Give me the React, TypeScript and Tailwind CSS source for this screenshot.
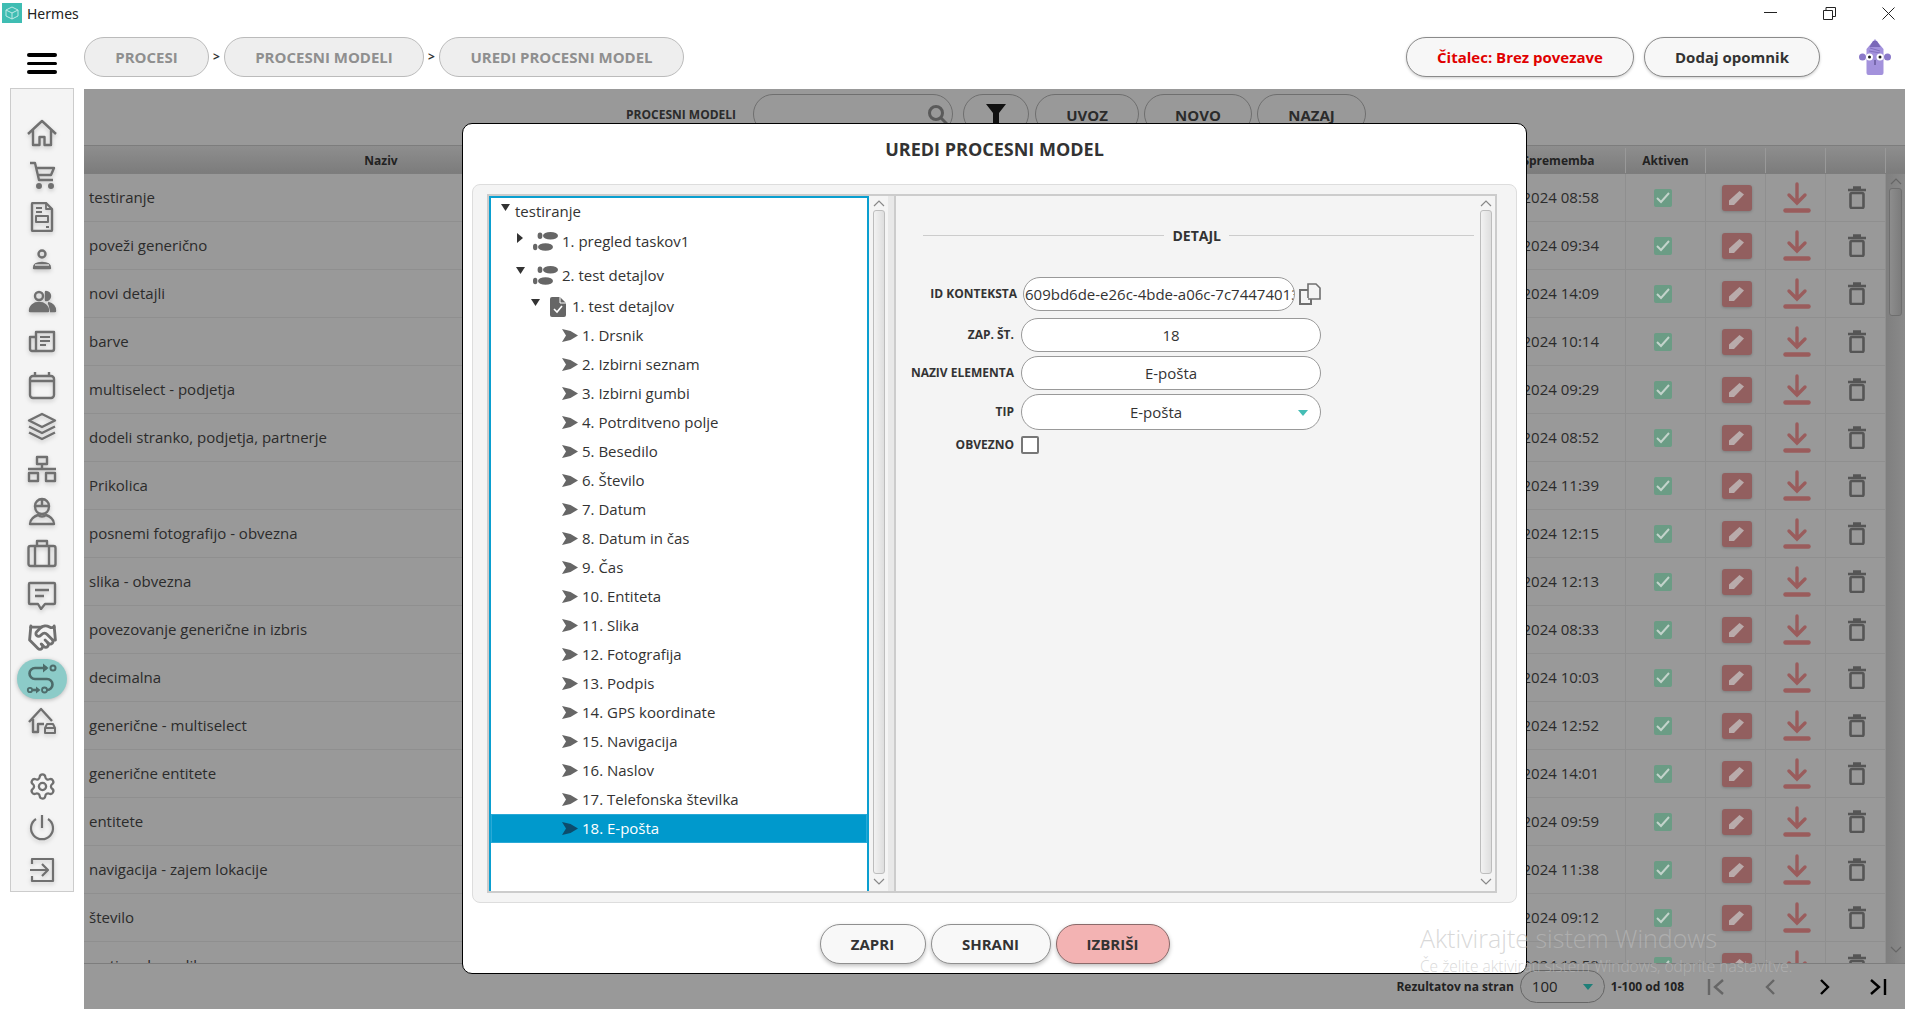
import { Settings, Handshake } from 'lucide-react'
import type { ReactNode } from 'react'

const rows = [
  ['testiranje', '08:58'],
  ['poveži generično', '09:34'],
  ['novi detajli', '14:09'],
  ['barve', '10:14'],
  ['multiselect - podjetja', '09:29'],
  ['dodeli stranko, podjetja, partnerje', '08:52'],
  ['Prikolica', '11:39'],
  ['posnemi fotografijo - obvezna', '12:15'],
  ['slika - obvezna', '12:13'],
  ['povezovanje generične in izbris', '08:33'],
  ['decimalna', '10:03'],
  ['generične - multiselect', '12:52'],
  ['generične entitete', '14:01'],
  ['entitete', '09:59'],
  ['navigacija - zajem lokacije', '11:38'],
  ['število', '09:12'],
  ['vrstice - besedilo', '12:52'],
]

const leaves = [
  '1. Drsnik',
  '2. Izbirni seznam',
  '3. Izbirni gumbi',
  '4. Potrditveno polje',
  '5. Besedilo',
  '6. Število',
  '7. Datum',
  '8. Datum in čas',
  '9. Čas',
  '10. Entiteta',
  '11. Slika',
  '12. Fotografija',
  '13. Podpis',
  '14. GPS koordinate',
  '15. Navigacija',
  '16. Naslov',
  '17. Telefonska številka',
  '18. E-pošta',
]

function Ico({ children, w = 30, h = 30 }: { children: ReactNode; w?: number; h?: number }) {
  return (
    <svg
      width={w}
      height={h}
      viewBox={`0 0 ${w} ${h}`}
      fill="none"
      stroke="#707070"
      strokeWidth="2.4"
      strokeLinejoin="round"
      className="drop-shadow-[0_2px_2px_rgba(0,0,0,0.18)]"
    >
      {children}
    </svg>
  )
}

const sideTop: ReactNode[] = [
  <Ico key="home">
    <path d="M1 16 15 3l14 13M6 12v15h6.500v-8h5v8H24V12" />
  </Ico>,
  <Ico key="cart">
    <path d="M3 3h5l4 17h14M8.500 8H27l-3 7H10.500" />
    <circle cx="12" cy="26" r="1.800" fill="#707070" />
    <circle cx="24" cy="26" r="1.800" fill="#707070" />
  </Ico>,
  <Ico key="doc">
    <path d="M6 1h13l6 6v21a1 1 0 0 1-1 1H6a1 1 0 0 1-1-1V2a1 1 0 0 1 1-1Z" />
    <path d="M19 1v6h6M9 6h6M9 10h6M19 25h3" strokeWidth="1.800" />
    <rect x="9" y="14" width="12" height="6" strokeWidth="2" />
  </Ico>,
  <Ico key="user">
    <circle cx="15" cy="10" r="3.500" />
    <path d="M7 24c0-3 3-5 8-5s8 2 8 5Z" fill="#707070" />
    <path d="M8 21h14" stroke="#f4f4f4" strokeWidth="1.200" />
  </Ico>,
  <Ico key="users">
    <circle cx="12" cy="10" r="4" />
    <path d="M19 6a4 4 0 0 1 0 8Z" fill="#707070" />
    <path d="M3 25c0-5 4-8 9-8s9 3 9 8Z" fill="#707070" />
    <path d="M21 17c4 1 7 4 7 8h-5" fill="#707070" />
  </Ico>,
  <Ico key="news">
    <path d="M9 22V4h18v17a2 2 0 0 1-2 2H5a2 2 0 0 1-2-2V9h5" />
    <path d="M13 9h10M13 13h10M13 17h6" strokeWidth="2" />
  </Ico>,
  <Ico key="calendar">
    <rect x="3" y="6" width="24" height="22" rx="3" />
    <path d="M3 11h24M8 2v4M22 2v4" />
  </Ico>,
  <Ico key="layers">
    <path d="m15 2 13 6.500L15 15 2 8.500Z" />
    <path d="m2 14.500 13 6.500 13-6.500M2 20.500 15 27l13-6.500" />
  </Ico>,
  <Ico key="network">
    <rect x="10" y="3" width="10" height="7" />
    <rect x="2" y="19" width="9" height="8" />
    <rect x="19" y="19" width="9" height="8" />
    <path d="M15 10v5M1 15h28" />
  </Ico>,
  <Ico key="worker">
    <path d="M8 10a7 7 0 0 1 14 0ZM15 3v7" />
    <path d="M8 10c0 5 3 8 7 8s7-3 7-8" />
    <path d="M3 28c0-5 5-8 8-9 2 2 6 2 8 0 3 1 8 4 8 9Z" />
  </Ico>,
  <Ico key="case">
    <rect x="1.500" y="8" width="27" height="20" rx="2" />
    <path d="M8 28V8M22 28V8M10 8V3h10v5" />
  </Ico>,
  <Ico key="chat">
    <path d="M3 3h24a1 1 0 0 1 1 1v19a1 1 0 0 1-1 1h-9l-4 5-3-5H3a1 1 0 0 1-1-1V4a1 1 0 0 1 1-1Z" />
    <path d="M8 10h14M8 16h9" />
  </Ico>,
  <Handshake key="hand" size={31} color="#707070" strokeWidth={2.2} />,
  <svg key="route" width="32" height="32" viewBox="0 0 32 32" fill="none" stroke="#4d6b6a" strokeWidth="2.600">
    <circle cx="27" cy="5" r="2.500" strokeWidth="2" />
    <path d="M21 5H9a5.500 5.500 0 0 0 0 11h12a5.500 5.500 0 0 1 0 11" />
    <path d="M17 0.500 22.500 5 17 9.500Z" fill="#4d6b6a" stroke="none" />
    <circle cx="4" cy="27" r="2.200" strokeWidth="1.800" />
    <path d="M7 27h4" />
    <path d="M10 23.500 14.500 27 10 30.500Z" fill="#4d6b6a" stroke="none" />
    <circle cx="18.500" cy="27" r="2.500" strokeWidth="1.800" />
  </svg>,
  <Ico key="garage">
    <path d="M2 16 14 3l11 12M6 13v13h5v-8h6" />
    <path d="M18 27v-5l2-4h6l2 4v5ZM18 22h10" strokeWidth="2" />
  </Ico>,
]

const sideBottom: ReactNode[] = [
  <Settings key="gear" size={29} color="#707070" strokeWidth={1.900} />,
  <Ico key="power">
    <path d="M9 6a11 11 0 1 0 12 0M15 2v13" strokeWidth="2.200" />
  </Ico>,
  <Ico key="out">
    <path d="M5 9V4h21v22H5v-5M3 15h17M15 9l6 6-6 6" strokeWidth="2.200" />
  </Ico>,
]

function Crumb({ w, children }: { w: string; children: ReactNode }) {
  return (
    <div
      className={`flex h-[40px] items-center justify-center rounded-full border-[1.5px] border-[#bbbbbb] bg-[#eeeeee] text-[15px] font-bold text-[#8f8f8f] ${w}`}
    >
      {children}
    </div>
  )
}

function Sep() {
  return <span className="w-[15px] text-center text-[12px] font-bold leading-none text-[#333333]">&gt;</span>
}

function ToolPill({ w, children }: { w: string; children: ReactNode }) {
  return (
    <div
      className={`flex h-[40px] items-center justify-center rounded-[20px] border-[1.5px] border-[#6f6f6f] pt-[2px] text-[15px] font-bold text-[#2b2b2b] ${w}`}
    >
      {children}
    </div>
  )
}

function Caret({ open }: { open: boolean }) {
  return open ? (
    <svg width="9" height="7" viewBox="0 0 9 7" className="mb-[9px] shrink-0">
      <path d="M0 0h9L4.500 7Z" fill="#333333" />
    </svg>
  ) : (
    <svg width="6" height="10" viewBox="0 0 6 10" className="mb-[8px] shrink-0">
      <path d="M0 0l6 5-6 5Z" fill="#333333" />
    </svg>
  )
}

function Steps() {
  return (
    <svg width="25" height="19" viewBox="0 0 25 19" className="ml-[8px] shrink-0" fill="#666666">
      <ellipse cx="7" cy="3.800" rx="2.400" ry="3.300" />
      <ellipse cx="17.500" cy="3.800" rx="7.500" ry="3.800" />
      <ellipse cx="2.200" cy="15" rx="2.200" ry="3.300" />
      <ellipse cx="12.500" cy="15" rx="7.500" ry="3.800" />
    </svg>
  )
}

function Leaf({ color }: { color: string }) {
  return (
    <svg width="16" height="13" viewBox="0 0 16 13" className="shrink-0">
      <path d="M0 0 8.500 2 16 6.500 8.500 11 0 13 4 6.500Z" fill={color} />
    </svg>
  )
}

function Label({ children, className = '' }: { children: ReactNode; className?: string }) {
  return <div className={`text-right text-[12px] font-bold text-[#333333] ${className}`}>{children}</div>
}

function FormRow({ label, children, top }: { label: string; children: ReactNode; top: string }) {
  return (
    <div className={`flex items-center ${top}`}>
      <Label className="w-[118px] shrink-0">{label}</Label>
      <div className="ml-[7px]">{children}</div>
    </div>
  )
}

function Input({ h, children }: { h: string; children: ReactNode }) {
  return (
    <div
      className={`relative flex w-[300px] items-center justify-center rounded-full border border-[#999999] bg-white text-[15px] text-[#333333] ${h}`}
    >
      {children}
    </div>
  )
}

function ScrollV({ thumb }: { thumb: string }) {
  return (
    <div className="flex w-[19px] shrink-0 flex-col items-center bg-[#f4f4f4]">
      <svg width="12" height="7" viewBox="0 0 12 7" className="mt-[4px]" fill="none" stroke="#888888" strokeWidth="1.200">
        <path d="m1 6 5-5 5 5" />
      </svg>
      <div className={`mt-[3px] w-[12px] rounded-[3px] border border-[#bdbdbd] bg-gradient-to-r from-[#f2f2f2] to-[#dedede] ${thumb}`} />
      <svg width="12" height="7" viewBox="0 0 12 7" className="mt-[4px]" fill="none" stroke="#888888" strokeWidth="1.200">
        <path d="m1 1 5 5 5-5" />
      </svg>
    </div>
  )
}

function ModalButton({ w, pink, children }: { w: string; pink?: boolean; children: ReactNode }) {
  return (
    <button
      className={`h-[40px] rounded-full border text-[15px] font-bold text-[#333333] shadow-[0_2px_4px_rgba(0,0,0,0.25)] ${w} ${
        pink ? 'border-[#8a6a6a] bg-[#f3b3b3]' : 'border-[#8f8f8f] bg-[#f8f8f8]'
      }`}
    >
      {children}
    </button>
  )
}

function PagerIcon({ d, color }: { d: string; color: string }) {
  return (
    <div className="flex w-[54px] justify-center">
      <svg width="20" height="18" viewBox="0 0 20 18" fill="none" stroke={color} strokeWidth="2.400">
        <path d={d} />
      </svg>
    </div>
  )
}

function TableRow({ name, time }: { name: string; time: string }) {
  return (
    <div className="grid h-[48px] shrink-0 grid-cols-[594px_808px_140px_80px_60px_60px_60px] border-b border-[#8f8f8f] text-[15px] text-[#2b2b2b]">
      <div className="flex items-center whitespace-nowrap pl-[5px]">{name}</div>
      <div />
      <div className="flex items-center justify-end whitespace-nowrap border-r border-[#8f8f8f] pr-[26px]">
        01.10.2024 {time}
      </div>
      <div className="flex items-center justify-center border-r border-[#8f8f8f] pr-[6px]">
        <div className="flex h-[18px] w-[18px] items-center justify-center rounded-[2px] bg-[#6b9c85]">
          <svg width="14" height="12" viewBox="0 0 14 12" fill="none" stroke="#c3d3cb" strokeWidth="2">
            <path d="m1 6 4 4 8-9" />
          </svg>
        </div>
      </div>
      <div className="flex items-center justify-center border-r border-[#8f8f8f] pl-[2px]">
        <div className="flex h-[26px] w-[30px] items-center justify-center rounded-[3px] bg-[#925f5f] shadow-[0_1px_3px_rgba(0,0,0,0.2)]">
          <svg width="17" height="16" viewBox="0 0 17 16" fill="#b9abab">
            <path d="M11.500 1 16 4.500 6 15H1v-4.500Z" />
          </svg>
        </div>
      </div>
      <div className="flex items-center justify-center border-r border-[#8f8f8f] pl-[2px]">
        <svg width="28" height="31" viewBox="0 0 28 31" fill="none" stroke="#9a5c5c" strokeWidth="3.400" strokeLinecap="round">
          <path d="M14 2v19M6 13l8 8 8-8" />
          <path d="M2.500 28.500h23" strokeWidth="4.500" />
        </svg>
      </div>
      <div className="flex items-center justify-center border-r border-[#8f8f8f] pl-[2px]">
        <svg width="18" height="23" viewBox="0 0 18 23" fill="none" stroke="#555555" strokeWidth="2.600">
          <path d="M0 4h18M5 1.500h8" />
          <rect x="2.500" y="7" width="13" height="15" rx="1.500" />
        </svg>
      </div>
    </div>
  )
}

export default function App() {
  return (
    <div className="relative h-[1027px] w-[1920px] overflow-hidden bg-white font-['Open_Sans',sans-serif]">
      {/* title bar */}
      <div className="flex h-[31px] items-start">
        <div className="ml-[2px] mt-[3px] flex h-[20px] w-[20px] items-center justify-center bg-[#3fbdb3]">
          <svg width="14" height="14" viewBox="0 0 14 14" fill="none" stroke="#bfeae6" strokeWidth="1">
            <path d="M7 1 13 4v6l-6 3-6-3V4ZM1 4l6 3 6-3M7 7v6" />
          </svg>
        </div>
        <span className="ml-[5px] mt-[3px] font-['Noto_Sans',sans-serif] text-[14px] text-[#222222]">Hermes</span>
        <div className="ml-auto mt-[7px] flex items-start">
          <svg width="13" height="12" viewBox="0 0 13 12" fill="none" stroke="#222222" strokeWidth="1" className="mr-[46px]">
            <path d="M0 5.500h13" />
          </svg>
          <svg width="13" height="13" viewBox="0 0 13 13" fill="none" stroke="#222222" strokeWidth="1" className="mr-[46px]">
            <path d="M.5 3.500h9v9h-9ZM3 3.500V.5h9.500v9H9.500" />
          </svg>
          <svg width="13" height="13" viewBox="0 0 13 13" fill="none" stroke="#222222" strokeWidth="1" className="mr-[25px]">
            <path d="m.5.5 12 12M12.500.5l-12 12" />
          </svg>
        </div>
      </div>

      {/* top bar */}
      <div className="flex h-[57px] items-start pt-[6px]">
        <div className="ml-[27px] mt-[16px] flex w-[30px] flex-col gap-[5px]">
          <div className="h-[3.500px] rounded-full bg-black" />
          <div className="h-[3.500px] rounded-full bg-black" />
          <div className="h-[3.500px] rounded-full bg-black" />
        </div>
        <div className="ml-[27px] flex items-center">
          <Crumb w="w-[125px]">PROCESI</Crumb>
          <Sep />
          <Crumb w="w-[200px]">PROCESNI MODELI</Crumb>
          <Sep />
          <Crumb w="w-[245px]">UREDI PROCESNI MODEL</Crumb>
        </div>
        <div className="ml-auto flex items-center">
          <div className="flex h-[40px] w-[228px] items-center justify-center rounded-full border-[1.5px] border-[#8a8a8a] bg-[#f7f7f7] text-[15px] font-bold text-[#e00000] shadow-[0_1px_3px_rgba(0,0,0,0.2)]">
            Čitalec: Brez povezave
          </div>
          <div className="ml-[10px] flex h-[40px] w-[176px] items-center justify-center rounded-full border-[1.5px] border-[#8a8a8a] bg-[#f7f7f7] text-[15px] font-bold text-[#333333] shadow-[0_1px_3px_rgba(0,0,0,0.2)]">
            Dodaj opomnik
          </div>
          <svg width="32" height="38" viewBox="0 0 32 38" className="ml-[39px] mr-[29px]">
            <path d="M7.500 35V11l6-7 2.500-3 2.500 3 6 7v24a2 2 0 0 1-2 2h-13a2 2 0 0 1-2-2Z" fill="#a392dc" />
            <path d="M10.500 9h11l-3.500-6h-4Z" fill="#7a68b8" />
            <path d="M10 13l11 2M11 10l10 3" stroke="#7a68b8" strokeWidth="0.800" />
            <circle cx="3.500" cy="19" r="3.500" fill="#8b79c9" />
            <circle cx="28.500" cy="19" r="3.500" fill="#8b79c9" />
            <circle cx="10.500" cy="19" r="3.500" fill="white" />
            <circle cx="21" cy="19" r="3.500" fill="white" />
            <circle cx="10.500" cy="19" r="1.500" fill="#222222" />
            <circle cx="21" cy="19" r="1.500" fill="#222222" />
            <path d="M16 22v5" stroke="#4a3f7a" strokeWidth="1" />
          </svg>
        </div>
      </div>

      <div className="flex items-start pl-[10px]">
        {/* sidebar */}
        <div className="flex h-[804px] w-[64px] shrink-0 flex-col items-center border border-[#cccccc] bg-[#f4f4f4] pt-[23px]">
          {sideTop.map((icon, i) => (
            <div key={i} className="flex h-[42px] w-full items-center justify-center">
              {i === 13 ? (
                <div className="flex h-[40px] w-[50px] items-center justify-center rounded-full bg-[#8ccbc8] shadow-[0_1px_4px_rgba(0,0,0,0.25)]">
                  {icon}
                </div>
              ) : (
                icon
              )}
            </div>
          ))}
          <div className="h-[23px]" />
          {sideBottom.map((icon, i) => (
            <div key={i} className="flex h-[42px] w-full items-center justify-center">
              {icon}
            </div>
          ))}
        </div>

        {/* main list, dimmed behind the dialog */}
        <div className="ml-[10px] mt-[1px] flex h-[920px] w-[1821px] flex-col bg-[#999999]">
          <div className="flex h-[56px] shrink-0 items-start pl-[542px] pt-[5px]">
            <span className="w-[110px] whitespace-nowrap pt-[12px] text-[12px] font-bold text-[#2b2b2b]">PROCESNI MODELI</span>
            <div className="relative ml-[17px] h-[40px] w-[200px] rounded-[20px] border-[1.5px] border-[#6f6f6f]">
              <svg width="20" height="22" viewBox="0 0 20 22" fill="none" stroke="#5a5a5a" strokeWidth="3" className="absolute left-[174px] top-[9px]">
                <circle cx="8" cy="9" r="6.500" />
                <path d="m13 14 6 6" />
              </svg>
            </div>
            <div className="ml-[10px]">
              <ToolPill w="w-[66px]">
                <svg width="20" height="22" viewBox="0 0 20 22" fill="#111111">
                  <path d="M0 0h20l-7 9v13H7V9Z" />
                </svg>
              </ToolPill>
            </div>
            <div className="ml-[6px]">
              <ToolPill w="w-[104px]">UVOZ</ToolPill>
            </div>
            <div className="ml-[5px]">
              <ToolPill w="w-[108px]">NOVO</ToolPill>
            </div>
            <div className="ml-[5px]">
              <ToolPill w="w-[109px]">NAZAJ</ToolPill>
            </div>
          </div>

          <div className="grid h-[29px] shrink-0 grid-cols-[594px_808px_140px_80px_60px_60px_60px_19px] border-y border-[#7d7d7d] bg-gradient-to-b from-[#8e8e8e] to-[#7c7c7c] pt-[2px] text-[12px] font-bold text-[#222222]">
            <div className="flex items-center justify-center">Naziv</div>
            <div />
            <div className="flex items-center justify-center border-r border-[#999999] pl-[6px]">Sprememba</div>
            <div className="flex items-center justify-center border-r border-[#999999]">Aktiven</div>
            <div className="border-r border-[#999999]" />
            <div className="border-r border-[#999999]" />
            <div className="border-r border-[#999999]" />
            <div />
          </div>

          <div className="flex h-[790px] shrink-0 overflow-hidden border-b border-[#7d7d7d]">
            <div className="flex w-[1802px] shrink-0 flex-col">
              {rows.map(([name, time]) => (
                <TableRow key={name} name={name} time={time} />
              ))}
            </div>
            <div className="flex w-[19px] shrink-0 flex-col items-center bg-gradient-to-r from-[#7f7f7f] to-[#8a8a8a]">
              <svg width="12" height="7" viewBox="0 0 12 7" className="mt-[4px]" fill="none" stroke="#666666" strokeWidth="1.200">
                <path d="m1 6 5-5 5 5" />
              </svg>
              <div className="mt-[3px] h-[128px] w-[13px] rounded-[3px] border border-[#6e6e6e] bg-gradient-to-r from-[#8d8d8d] to-[#7c7c7c]" />
              <svg width="12" height="7" viewBox="0 0 12 7" className="mt-[630px]" fill="none" stroke="#666666" strokeWidth="1.200">
                <path d="m1 1 5 5 5-5" />
              </svg>
            </div>
          </div>

          <div className="flex h-[45px] items-center justify-end">
            <span className="whitespace-nowrap text-[12px] font-bold text-[#222222]">Rezultatov na stran</span>
            <div className="ml-[6px] flex h-[33px] w-[85px] items-center justify-between rounded-full border border-[#666666] pl-[11px] pr-[11px] text-[15px] text-[#222222]">
              100
              <svg width="10" height="6" viewBox="0 0 10 6">
                <path d="M0 0h10L5 6Z" fill="#1f7f78" />
              </svg>
            </div>
            <span className="ml-[6px] whitespace-nowrap text-[12px] font-bold text-[#222222]">1-100 od 108</span>
            <div className="ml-[5px] flex items-center">
              <PagerIcon d="M3 1v16M17 2 9 9l8 7" color="#666666" />
              <PagerIcon d="m14 2-7 7 7 7" color="#666666" />
              <PagerIcon d="m7 2 7 7-7 7" color="#000000" />
              <PagerIcon d="m3 2 8 7-8 7M17 1v16" color="#000000" />
            </div>
          </div>
        </div>
      </div>

      {/* dialog */}
      <div className="absolute left-[462px] top-[123px] flex h-[851px] w-[1065px] flex-col rounded-[10px] border border-black bg-white">
        <div className="flex h-[60px] shrink-0 items-start justify-center pt-[12px] text-[18px] font-bold text-[#333333]">
          UREDI PROCESNI MODEL
        </div>

        <div className="mx-[9px] h-[719px] shrink-0 rounded-[8px] border border-[#dddddd] bg-[#f4f4f4] py-[9px] pl-[14px] pr-[19px]">
          <div className="flex h-full border-2 border-[#cccccc]">
            {/* tree */}
            <div className="flex h-full w-[380px] shrink-0 flex-col overflow-hidden border-2 border-b-0 border-[#0a9fd0] bg-white pb-0 text-[15px] text-[#333333]">
              <div className="flex h-[27px] shrink-0 items-center pl-[10px]">
                <Caret open />
                <span className="ml-[5px]">testiranje</span>
              </div>
              <div className="flex h-[33px] shrink-0 items-center pl-[26px]">
                <Caret open={false} />
                <div className="ml-[2px]" />
                <Steps />
                <span className="ml-[4px]">1. pregled taskov1</span>
              </div>
              <div className="flex h-[34px] shrink-0 items-center pl-[25px]">
                <Caret open />
                <Steps />
                <span className="ml-[4px]">2. test detajlov</span>
              </div>
              <div className="flex h-[29px] shrink-0 items-center pl-[40px]">
                <Caret open />
                <svg width="16" height="20" viewBox="0 0 16 20" className="ml-[10px] shrink-0">
                  <path d="M2 0h8l6 6v12a2 2 0 0 1-2 2H2a2 2 0 0 1-2-2V2a2 2 0 0 1 2-2Z" fill="#666666" />
                  <path d="M10 0v6h6" fill="none" stroke="white" strokeWidth="1" />
                  <path d="m4 12 3 3 5-6" fill="none" stroke="white" strokeWidth="1.600" />
                </svg>
                <span className="ml-[6px]">1. test detajlov</span>
              </div>
              {leaves.map((leaf, i) =>
                i === 17 ? (
                  <div
                    key={leaf}
                    className="flex h-[29px] shrink-0 items-center border border-[#2aa9d6] bg-[#0099cc] pl-[70px] text-white"
                  >
                    <Leaf color="#0c4c6c" />
                    <span className="ml-[4px]">{leaf}</span>
                  </div>
                ) : (
                  <div key={leaf} className="flex h-[29px] shrink-0 items-center pl-[71px]">
                    <Leaf color="#666666" />
                    <span className="ml-[4px]">{leaf}</span>
                  </div>
                ),
              )}
            </div>
            <ScrollV thumb="h-[664px]" />
            <div className="w-[8px] shrink-0 border-r-2 border-[#cccccc] bg-[#e8e8e8]" />

            {/* detail */}
            <div className="flex min-w-0 flex-1">
              <div className="min-w-0 flex-1 pt-[31px]">
                <div className="ml-[27px] mr-[2px] flex h-[16px] items-center">
                  <div className="h-px flex-1 bg-[#cccccc]" />
                  <span className="mx-[8px] text-[14px] font-bold text-[#333333]">DETAJL</span>
                  <div className="h-px w-[245px] bg-[#cccccc]" />
                </div>

                <div className="mt-[34px] flex h-[34px] items-center">
                  <Label className="w-[121px] shrink-0">ID KONTEKSTA</Label>
                  <div className="ml-[6px] flex h-[34px] w-[272px] items-center overflow-hidden rounded-full border border-[#999999] bg-white pl-[1px] text-[15px] text-[#333333]">
                    <span className="whitespace-nowrap">609bd6de-e26c-4bde-a06c-7c7447401383</span>
                  </div>
                  <svg width="22" height="22" viewBox="0 0 22 22" fill="none" stroke="#707070" strokeWidth="1.600" className="ml-[4px]">
                    <path d="M9 15V1h8l4 4v11h-12" />
                    <path d="M9 7H1v14h11v-5" strokeWidth="2" />
                  </svg>
                </div>
                <FormRow label="ZAP. ŠT." top="mt-[7px]">
                  <Input h="h-[34px]">18</Input>
                </FormRow>
                <FormRow label="NAZIV ELEMENTA" top="mt-[4px]">
                  <Input h="h-[34px]">E-pošta</Input>
                </FormRow>
                <FormRow label="TIP" top="mt-[4px]">
                  <Input h="h-[36px]">
                    <span className="mr-[30px]">E-pošta</span>
                    <svg width="10" height="6" viewBox="0 0 10 6" className="absolute right-[12px] top-[15px]">
                      <path d="M0 0h10L5 6Z" fill="#45bdb5" />
                    </svg>
                  </Input>
                </FormRow>
                <FormRow label="OBVEZNO" top="mt-[6px]">
                  <div className="h-[18px] w-[18px] rounded-[2px] border-2 border-[#777777] bg-white" />
                </FormRow>
              </div>
              <ScrollV thumb="h-[664px]" />
            </div>
          </div>
        </div>

        <div className="flex justify-center gap-[5px] pt-[21px]">
          <ModalButton w="w-[106px]">ZAPRI</ModalButton>
          <ModalButton w="w-[120px]">SHRANI</ModalButton>
          <ModalButton w="w-[114px]" pink>
            IZBRIŠI
          </ModalButton>
        </div>
      </div>

      {/* windows watermark */}
      <div className="pointer-events-none absolute left-[1420px] top-[921px] whitespace-nowrap font-light text-[rgba(190,190,190,0.6)]">
        <div className="text-[25px] leading-[34px]">Aktivirajte sistem Windows</div>
        <div className="text-[15.500px] leading-[22px]">Če želite aktivirati sistem Windows, odprite nastavitve.</div>
      </div>
    </div>
  )
}
